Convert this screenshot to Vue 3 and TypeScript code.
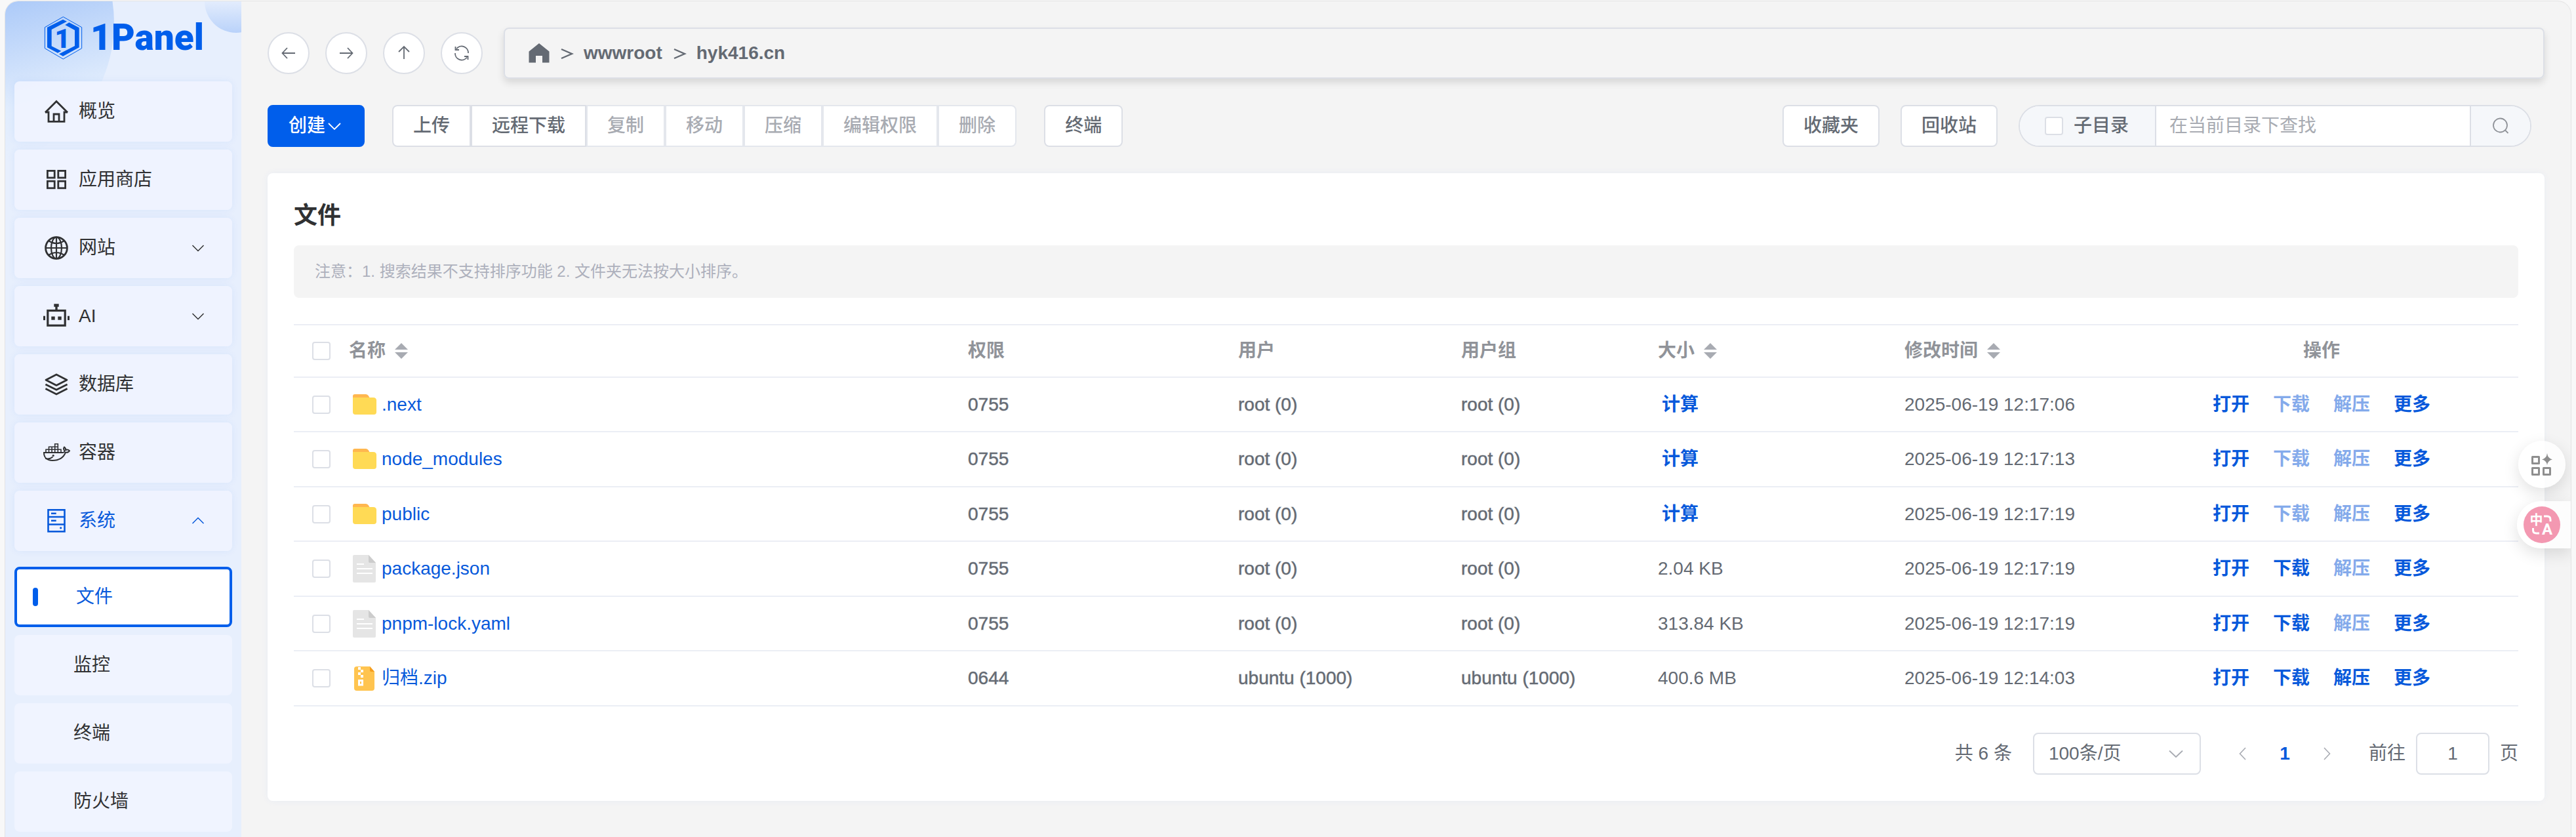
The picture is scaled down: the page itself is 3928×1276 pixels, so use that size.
<script setup lang="ts">
import { ref } from 'vue'

type IconName = 'home' | 'apps' | 'globe' | 'robot' | 'layers' | 'docker' | 'server'

interface MenuEntry {
  label: string
  icon: IconName
  expandable?: boolean
  open?: boolean
}

interface FileRow {
  name: string
  kind: 'folder' | 'file' | 'zip'
  mode: string
  user: string
  group: string
  size: string | null
  mtime: string
  canDownload: boolean
  canExtract: boolean
}

const menu: MenuEntry[] = [
  { label: '概览', icon: 'home' },
  { label: '应用商店', icon: 'apps' },
  { label: '网站', icon: 'globe', expandable: true },
  { label: 'AI', icon: 'robot', expandable: true },
  { label: '数据库', icon: 'layers' },
  { label: '容器', icon: 'docker' },
  { label: '系统', icon: 'server', expandable: true, open: true },
]

const submenu = ['文件', '监控', '终端', '防火墙']
const activeSub = ref('文件')

const crumbs = ['wwwroot', 'hyk416.cn']

const fileActions = [
  { label: '上传', disabled: false },
  { label: '远程下载', disabled: false },
  { label: '复制', disabled: true },
  { label: '移动', disabled: true },
  { label: '压缩', disabled: true },
  { label: '编辑权限', disabled: true },
  { label: '删除', disabled: true },
]

const rows: FileRow[] = [
  { name: '.next', kind: 'folder', mode: '0755', user: 'root (0)', group: 'root (0)', size: null, mtime: '2025-06-19 12:17:06', canDownload: false, canExtract: false },
  { name: 'node_modules', kind: 'folder', mode: '0755', user: 'root (0)', group: 'root (0)', size: null, mtime: '2025-06-19 12:17:13', canDownload: false, canExtract: false },
  { name: 'public', kind: 'folder', mode: '0755', user: 'root (0)', group: 'root (0)', size: null, mtime: '2025-06-19 12:17:19', canDownload: false, canExtract: false },
  { name: 'package.json', kind: 'file', mode: '0755', user: 'root (0)', group: 'root (0)', size: '2.04 KB', mtime: '2025-06-19 12:17:19', canDownload: true, canExtract: false },
  { name: 'pnpm-lock.yaml', kind: 'file', mode: '0755', user: 'root (0)', group: 'root (0)', size: '313.84 KB', mtime: '2025-06-19 12:17:19', canDownload: true, canExtract: false },
  { name: '归档.zip', kind: 'zip', mode: '0644', user: 'ubuntu (1000)', group: 'ubuntu (1000)', size: '400.6 MB', mtime: '2025-06-19 12:14:03', canDownload: true, canExtract: true },
]

const keyword = ref('')
const includeSub = ref(false)
const pageSize = ref('100')
const jumpTo = ref('1')
</script>

<template>
  <div class="window">
    <aside class="sidebar">
      <div class="brand">
        <svg class="brand-mark" viewBox="198 69 180 201" aria-hidden="true">
          <path d="M289 74 374 122V218L289 267 205 218V122Z" fill="none" stroke="#005eeb" stroke-width="3" />
          <path d="M216 122 288 86 306 95 236 132V208L280 230 264 239 216 214Z" fill="#005eeb" />
          <path d="M316 100 362 124V214L288 254 270 244 342 207V135L298 111Z" fill="#005eeb" />
          <text x="286" y="215" text-anchor="middle" font-size="122" font-weight="900" font-family="Roboto, sans-serif" fill="#005eeb">1</text>
        </svg>
        <span class="brand-name">1Panel</span>
      </div>

      <nav class="menu">
        <component
          :is="item.expandable ? 'button' : 'a'"
          v-for="item in menu"
          :key="item.label"
          class="menu-item"
          :class="{ open: item.open }"
          :href="item.expandable ? undefined : '#'"
          :type="item.expandable ? 'button' : undefined"
        >
          <svg class="menu-icon" viewBox="0 0 36 36" fill="none" stroke="currentColor" stroke-width="2.8" aria-hidden="true">
            <template v-if="item.icon === 'home'">
              <path d="M1 19.5 18 2.5 35 19.5" />
              <path d="M1 19H6V33.4H30V19H35" />
              <path d="M14 33V22H22V33" />
            </template>
            <template v-else-if="item.icon === 'apps'">
              <rect x="4.4" y="4.4" width="10.8" height="10.6" />
              <rect x="20.8" y="4.4" width="10.8" height="10.6" />
              <rect x="4.4" y="20.2" width="10.8" height="10.6" />
              <rect x="20.8" y="20.2" width="10.8" height="10.6" />
            </template>
            <template v-else-if="item.icon === 'globe'">
              <circle cx="18" cy="18" r="16.4" />
              <g stroke-width="2.2">
                <ellipse cx="18" cy="18" rx="8" ry="16.4" />
                <path d="M18 2V34M2 18H34M6 7Q18 15 30 7M6 29Q18 21 30 29" />
              </g>
            </template>
            <template v-else-if="item.icon === 'robot'">
              <rect x="4.8" y="9.5" width="26.4" height="22.7" stroke-width="3.2" />
              <g fill="currentColor" stroke="none">
                <path d="M14.3 -.7H21.7V3.7H19.7V8H16.3V3.7H14.3Z" />
                <rect x="10.3" y="18.5" width="5.4" height="5.2" />
                <rect x="20.3" y="18.5" width="5.4" height="5.2" />
                <rect x="-2" y="17.7" width="3" height="6.4" />
                <rect x="35" y="17.7" width="3" height="6.4" />
              </g>
            </template>
            <template v-else-if="item.icon === 'layers'">
              <path d="M18 3 34 11.2 18 19.4 2 11.2Z" stroke-linejoin="round" />
              <path d="M1.4 18 18 26.3 34.6 18M1.4 24.6 18 32.9 34.6 24.6" />
            </template>
            <template v-else-if="item.icon === 'docker'">
              <path
                stroke-width="2"
                d="M-1 18H27.5C30 18 31 16.5 30 14.5 28.6 12.500 28.800 11 30 9.600 32 11 32.400 12.600 32.200 14 34 13.300 36.500 13.800 38 15.200 36.500 17.800 34 18 32 17.700 29 25.500 23 30 12 30 3 30-1 25-1 18Z"
              />
              <path stroke-width="1.6" d="M2 17.500V13.300H25V17.500M6.500 17.500V9.200H20.300V17.500M11.100 17.500V9.200M15.700 17.500V4.700H20.300V9.200" />
              <path stroke-width="2" d="M1 26.800C6 28.300 9.500 27 12.500 24.500" />
              <circle cx="13.200" cy="22.500" r="1.600" fill="currentColor" stroke="none" />
            </template>
            <template v-else>
              <rect x="5.500" y="1.300" width="25" height="33" stroke-width="2.600" />
              <path stroke-width="2.400" d="M5 12H31M5 23.500H31M10 6.700H17.700M10 17.700H17.700" />
              <circle cx="24.700" cy="28.800" r="1.600" fill="currentColor" stroke="none" />
            </template>
          </svg>
          <span class="menu-label">{{ item.label }}</span>
          <svg v-if="item.expandable" class="menu-arrow" viewBox="0 0 24 24" fill="none" stroke="currentColor" stroke-width="1.500" aria-hidden="true">
            <path :d="item.open ? 'M3.500 16 12 7.500 20.500 16' : 'M3.500 8 12 16.500 20.500 8'" />
          </svg>
        </component>

        <div class="submenu">
          <a v-for="name in submenu" :key="name" href="#" class="sub-item" :class="{ active: name === activeSub }">{{ name }}</a>
        </div>
      </nav>
    </aside>

    <main class="main">
      <div class="path-row">
        <div class="nav-buttons">
          <button type="button" class="round" aria-label="后退">
            <svg viewBox="0 0 28 28"><path d="M24 14H5M12 6 4.500 14 12 22" /></svg>
          </button>
          <button type="button" class="round" aria-label="前进">
            <svg viewBox="0 0 28 28"><path d="M4 14H23M16 6 23.500 14 16 22" /></svg>
          </button>
          <button type="button" class="round" aria-label="上级目录">
            <svg viewBox="0 0 28 28"><path d="M14 23V4M6 12 14 4 22 12" /></svg>
          </button>
          <button type="button" class="round" aria-label="刷新">
            <svg viewBox="0 0 28 28">
              <path d="M4 14A10 10 0 0 0 22 20.500M24 14A10 10 0 0 0 6 7.500" />
              <path d="M4.500 4V9H10M23.500 24V19H18" />
            </svg>
          </button>
        </div>
        <div class="path-bar">
          <a href="#" class="crumb-home" aria-label="根目录">
            <svg viewBox="0 0 32 32" aria-hidden="true"><path d="M16 1 31.500 13.500V30.500H21V20H11V30.500H.5V13.500Z" fill="currentColor" /></svg>
          </a>
          <template v-for="c in crumbs" :key="c">
            <svg class="crumb-sep" viewBox="0 0 20 20" aria-hidden="true"><path d="M2 4 18 11 2 18" fill="none" stroke="currentColor" stroke-width="2.400" /></svg>
            <a href="#" class="crumb">{{ c }}</a>
          </template>
        </div>
      </div>

      <div class="toolbar">
        <button type="button" class="btn primary">
          创建
          <svg viewBox="0 0 28 28" aria-hidden="true"><path d="M5 10 14 19 23 10" fill="none" stroke="currentColor" stroke-width="1.800" /></svg>
        </button>
        <div class="btn-group">
          <button v-for="a in fileActions" :key="a.label" type="button" class="btn" :disabled="a.disabled">{{ a.label }}</button>
        </div>
        <button type="button" class="btn">终端</button>
        <div class="toolbar-right">
          <button type="button" class="btn">收藏夹</button>
          <button type="button" class="btn">回收站</button>
          <form class="search" @submit.prevent>
            <label class="search-scope">
              <input v-model="includeSub" type="checkbox" class="check" />
              <span>子目录</span>
            </label>
            <input v-model="keyword" type="text" class="search-input" placeholder="在当前目录下查找" aria-label="在当前目录下查找" />
            <button type="submit" class="search-btn" aria-label="搜索">
              <svg viewBox="0 0 28 28" fill="none" stroke="currentColor" stroke-width="1.800"><circle cx="13.500" cy="13" r="10.500" /><path d="M21 20.500 25.500 25" /></svg>
            </button>
          </form>
        </div>
      </div>

      <section class="card">
        <h1 class="card-title">文件</h1>
        <p class="notice">注意：1. 搜索结果不支持排序功能 2. 文件夹无法按大小排序。</p>

        <table class="files">
          <colgroup>
            <col class="c-check" />
            <col />
            <col class="c-mode" />
            <col class="c-user" />
            <col class="c-group" />
            <col class="c-size" />
            <col class="c-time" />
            <col class="c-ops" />
          </colgroup>
          <thead>
            <tr>
              <th class="cell-check"><input type="checkbox" class="check" aria-label="全选" /></th>
              <th><span class="sortable">名称<i class="sort" /></span></th>
              <th>权限</th>
              <th>用户</th>
              <th>用户组</th>
              <th><span class="sortable">大小<i class="sort" /></span></th>
              <th><span class="sortable">修改时间<i class="sort" /></span></th>
              <th class="cell-ops">操作</th>
            </tr>
          </thead>
          <tbody>
            <tr v-for="row in rows" :key="row.name">
              <td class="cell-check"><input type="checkbox" class="check" :aria-label="row.name" /></td>
              <td>
                <a href="#" class="file-link">
                  <svg v-if="row.kind === 'folder'" class="file-icon" viewBox="0 0 36 44" aria-hidden="true">
                    <path d="M0 18V9Q0 6 3 6H20Q22.500 6 24 8.500L26.500 13V20H0Z" fill="#ffb74f" />
                    <path d="M0 11H31Q36 11 36 15.500V33Q36 37 32 37H4Q0 37 0 33Z" fill="#ffda55" />
                  </svg>
                  <svg v-else-if="row.kind === 'file'" class="file-icon" viewBox="0 0 36 44" aria-hidden="true">
                    <path d="M2 1H24L35 13V41Q35 43 33 43H2Q0 43 0 41V3Q0 1 2 1Z" fill="#e5e5e5" />
                    <path d="M24 1 35 13H26Q24 13 24 11Z" fill="#cccccc" />
                    <path d="M6 15H17M6 22H30M6 29H30" stroke="#fff" stroke-width="2" />
                  </svg>
                  <svg v-else class="file-icon" viewBox="0 0 36 44" aria-hidden="true">
                    <path d="M6 4H26L33 12V37Q33 41 29 41H6Q2 41 2 37V8Q2 4 6 4Z" fill="#ffc44f" />
                    <path d="M26 4 33 12H28Q26 12 26 10Z" fill="#f59e1f" />
                    <path d="M8 5H12V9H8ZM12 9H16V13H12ZM8 13H12V17H8ZM12 17H16V21H12Z" fill="#fff" />
                    <path d="M9.500 25.500H14.500V32H9.500Z" fill="none" stroke="#fff" stroke-width="3" />
                  </svg>
                  <span>{{ row.name }}</span>
                </a>
              </td>
              <td><button type="button" class="plain">{{ row.mode }}</button></td>
              <td><button type="button" class="plain">{{ row.user }}</button></td>
              <td><button type="button" class="plain">{{ row.group }}</button></td>
              <td>
                <button v-if="row.size === null" type="button" class="op calc">计算</button>
                <template v-else>{{ row.size }}</template>
              </td>
              <td>{{ row.mtime }}</td>
              <td class="cell-ops">
                <div class="ops">
                  <button type="button" class="op">打开</button>
                  <button type="button" class="op" :disabled="!row.canDownload">下载</button>
                  <button type="button" class="op" :disabled="!row.canExtract">解压</button>
                  <button type="button" class="op">更多</button>
                </div>
              </td>
            </tr>
          </tbody>
        </table>

        <div class="pagination">
          <span class="total">共 {{ rows.length }} 条</span>
          <span class="select-wrap">
            <select v-model="pageSize" class="page-size" aria-label="每页条数">
              <option value="100">100条/页</option>
              <option value="200">200条/页</option>
            </select>
            <svg viewBox="0 0 28 28" aria-hidden="true"><path d="M4 9.500 14 19 24 9.500" fill="none" stroke="currentColor" stroke-width="1.800" /></svg>
          </span>
          <div class="pager">
            <button type="button" class="page-btn muted" aria-label="上一页">
              <svg viewBox="0 0 24 24"><path d="M16 3 7.500 12 16 21" /></svg>
            </button>
            <button type="button" class="page-btn current">1</button>
            <button type="button" class="page-btn muted" aria-label="下一页">
              <svg viewBox="0 0 24 24"><path d="M8 3 16.500 12 8 21" /></svg>
            </button>
          </div>
          <label class="jump">前往<input v-model="jumpTo" type="text" class="jump-input" />页</label>
        </div>
      </section>
    </main>

    <div class="floating">
      <button type="button" class="float-apps" aria-label="工具">
        <svg viewBox="0 0 36 36" aria-hidden="true">
          <path d="M3.500 6.500H13.500V16.500H3.500ZM3.500 23.500H13.500V33.500H3.500ZM20.500 23.500H30.500V33.500H20.500Z" fill="none" stroke="#8e8e8e" stroke-width="3" stroke-linejoin="round" />
          <path d="M26 1Q27 9 34 10.500 27 12 26 19 25 12 18 10.500 25 9 26 1Z" fill="#8e8e8e" />
        </svg>
      </button>
      <button type="button" class="float-translate" aria-label="翻译">
        <svg viewBox="0 0 56 56" aria-hidden="true">
          <circle cx="28" cy="28" r="28" fill="#f398b1" />
          <text x="19.500" y="28" text-anchor="middle" font-size="20" font-weight="700" font-family="'Noto Sans CJK SC', sans-serif" fill="#fff">中</text>
          <text x="36" y="43" text-anchor="middle" font-size="24" font-weight="700" font-family="Roboto, sans-serif" fill="#fff">A</text>
          <path d="M31 15H36Q41 15 41 20V23M14.500 33V36Q14.500 41 19.500 41H24" fill="none" stroke="#fff" stroke-width="3" />
        </svg>
      </button>
    </div>
  </div>
</template>

<style>
body {
  background: #f8f8f8;
}
</style>

<style scoped>
.window {
  --blue: #005eeb;
  --blue-text: #0759db;
  --text: #646a73;
  --line: #dcdfe6;
  position: relative;
  display: flex;
  box-sizing: border-box;
  min-height: calc(100vh - 1px);
  margin: 1px 7px 0;
  border: 1px solid #e4e4e4;
  border-bottom: 0;
  border-radius: 21px 21px 0 0;
  overflow: hidden;
  background: #f4f4f4;
  color: var(--text);
  font: 28px/40px "Liberation Sans", "Noto Sans CJK SC", sans-serif;
}

.window *,
.window *::before,
.window *::after {
  box-sizing: border-box;
}

button,
input,
select {
  margin: 0;
  padding: 0;
  border: 0;
  background: none;
  color: inherit;
  font: inherit;
}

a {
  color: inherit;
  text-decoration: none;
}

svg {
  display: block;
  flex: none;
  overflow: visible;
}

/* Sidebar */
.sidebar {
  position: relative;
  flex: none;
  width: 360px;
  overflow: hidden;
  background: #e7effd;
}

.sidebar::before,
.sidebar::after {
  content: "";
  position: absolute;
  border-radius: 50%;
}

.sidebar::before {
  left: -274px;
  top: -187px;
  width: 440px;
  height: 440px;
  background: linear-gradient(165deg, #a9c8f8 45%, rgba(221, 235, 253, 0.7) 76%, rgba(231, 239, 253, 0) 92%);
}

.sidebar::after {
  left: 304px;
  top: -48px;
  width: 96px;
  height: 96px;
  background: linear-gradient(180deg, #e7effd 45%, #b9d2fa);
}

.brand {
  position: relative;
  z-index: 1;
  display: flex;
  align-items: center;
  gap: 12px;
  height: 110px;
  padding-left: 58px;
}

.brand-mark {
  width: 60px;
  height: 67px;
}

.brand-name {
  color: var(--blue);
  font: 900 55px/64px Roboto, sans-serif;
}

.menu {
  position: relative;
  z-index: 1;
  display: flex;
  flex-direction: column;
  gap: 12px;
  padding: 12px 14px 0;
}

.menu-item {
  display: flex;
  align-items: center;
  gap: 16px;
  height: 92px;
  padding: 0 40px 0 46px;
  border-radius: 8px;
  background: rgba(240, 244, 255, 0.88);
  box-shadow: 0 0 12px rgba(0, 94, 235, 0.07);
  color: #303133;
  text-align: left;
}

.menu-item.open {
  color: var(--blue-text);
}

.menu-icon {
  width: 36px;
  height: 36px;
}

.menu-label {
  flex: 1;
}

.menu-arrow {
  width: 24px;
  height: 24px;
}

.submenu {
  display: flex;
  flex-direction: column;
  gap: 12px;
  margin-top: 12px;
}

.sub-item {
  display: flex;
  align-items: center;
  height: 92px;
  padding-left: 90px;
  border-radius: 8px;
  background: #f0f4ff;
  color: #303133;
}

.sub-item.active {
  padding-left: 24px;
  border: 4px solid var(--blue);
  background: #fff;
  color: var(--blue-text);
}

.sub-item.active::before {
  content: "";
  width: 8px;
  height: 28px;
  margin-right: 58px;
  border-radius: 4px;
  background: var(--blue);
}

/* Main column */
.main {
  display: flex;
  flex: 1;
  flex-direction: column;
  gap: 40px;
  min-width: 0;
  padding: 40px;
}

.path-row {
  display: flex;
  align-items: center;
  gap: 32px;
}

.nav-buttons {
  display: flex;
  gap: 24px;
}

.round {
  display: flex;
  align-items: center;
  justify-content: center;
  width: 64px;
  height: 64px;
  border: 2px solid var(--line);
  border-radius: 50%;
  background: #fff;
}

.round svg {
  width: 28px;
  height: 28px;
  fill: none;
  stroke: currentColor;
  stroke-width: 1.8;
}

.path-bar {
  display: flex;
  flex: 1;
  align-items: center;
  gap: 16px;
  height: 78px;
  padding: 0 36px;
  border: 2px solid var(--line);
  border-radius: 8px;
  box-shadow: 0 6px 12px rgba(0, 0, 0, 0.12);
}

.crumb-home svg {
  width: 32px;
  height: 32px;
}

.crumb-sep {
  width: 20px;
  height: 20px;
}

.crumb {
  font-weight: 700;
}

/* Toolbar */
.toolbar {
  display: flex;
  gap: 42px;
  padding-right: 20px;
}

.btn {
  display: flex;
  align-items: center;
  height: 64px;
  padding: 0 30px;
  border: 2px solid var(--line);
  border-radius: 8px;
  background: #fff;
  font-weight: 500;
  white-space: nowrap;
}

.btn:disabled {
  border-color: #e4e7ed;
  color: #a8abb2;
}

.btn.primary {
  border-color: var(--blue);
  background: var(--blue);
  color: #fff;
}

.btn.primary svg {
  width: 28px;
  height: 28px;
}

.btn-group {
  display: flex;
}

.btn-group .btn {
  border-radius: 0;
}

.btn-group .btn:first-child {
  border-radius: 8px 0 0 8px;
}

.btn-group .btn:last-child {
  border-radius: 0 8px 8px 0;
}

.toolbar-right {
  display: flex;
  gap: 32px;
  margin-left: auto;
}

.search {
  display: flex;
  width: 782px;
  height: 64px;
  border: 2px solid var(--line);
  border-radius: 32px;
  overflow: hidden;
  background: #fff;
}

.search-scope {
  display: flex;
  align-items: center;
  gap: 16px;
  width: 208px;
  padding-left: 38px;
  border-right: 2px solid var(--line);
  background: #f5f7fa;
  font-weight: 500;
}

.search-input {
  flex: 1;
  min-width: 0;
  padding: 0 20px;
  outline: 0;
}

.search-input::placeholder {
  color: #a8abb2;
  opacity: 1;
}

.search-btn {
  display: flex;
  align-items: center;
  justify-content: center;
  width: 92px;
  border-left: 2px solid var(--line);
  background: #f5f7fa;
  color: #909399;
}

.search-btn svg {
  width: 28px;
  height: 28px;
}

.check {
  display: block;
  flex: none;
  width: 28px;
  height: 28px;
  border: 2px solid var(--line);
  border-radius: 4px;
  appearance: none;
  background: #fff;
}

/* File card */
.card {
  padding: 40px;
  border-radius: 8px;
  background: #fff;
  box-shadow: 0 0 12px rgba(0, 94, 235, 0.05);
}

.card-title {
  margin: 0 0 20px;
  color: #303133;
  font-size: 36px;
  font-weight: 700;
  line-height: 50px;
}

.notice {
  margin: 0 0 40px;
  padding: 20px 32px;
  border-radius: 8px;
  background: #f4f4f4;
  color: #adb0bc;
  font-size: 24px;
}

.files {
  width: 100%;
  border-spacing: 0;
  border-top: 2px solid #ebeef5;
  table-layout: fixed;
}

.c-check {
  width: 60px;
}

.c-mode {
  width: 412px;
}

.c-user {
  width: 340px;
}

.c-group {
  width: 300px;
}

.c-size {
  width: 376px;
}

.c-time {
  width: 360px;
}

.c-ops {
  width: 600px;
}

.files th,
.files td {
  height: 84px;
  padding: 0 24px;
  border-bottom: 2px solid #ebeef5;
  text-align: left;
  white-space: nowrap;
}

.files th {
  height: 80px;
  color: #909399;
  font-weight: 700;
}

.files tbody tr:nth-child(odd) td {
  height: 83px;
}

.files .cell-check {
  padding: 0 0 0 28px;
}

.files .cell-ops {
  text-align: center;
}

.sortable {
  display: flex;
  align-items: center;
  gap: 14px;
}

.sort {
  display: flex;
  flex-direction: column;
  gap: 4px;
}

.sort::before,
.sort::after {
  content: "";
  border: 10px solid transparent;
}

.sort::before {
  border-top: 0;
  border-bottom-color: #a8abb2;
}

.sort::after {
  border-bottom: 0;
  border-top-color: #a8abb2;
}

.file-link {
  display: flex;
  align-items: center;
  gap: 8px;
  padding-left: 6px;
  color: var(--blue-text);
}

.file-icon {
  width: 36px;
  height: 44px;
}

/* Medium weight for the Latin face, which only ships regular and bold */
.plain {
  display: block;
  -webkit-text-stroke: 1px rgba(100, 106, 115, 0.5);
}

.ops {
  display: flex;
  justify-content: center;
  gap: 36px;
}

.op {
  color: var(--blue-text);
  font-weight: 700;
}

.op:disabled {
  color: #84aaeb;
}

.calc {
  display: block;
  padding-left: 6px;
}

/* Pagination */
.pagination {
  display: flex;
  align-items: center;
  justify-content: flex-end;
  gap: 32px;
  margin-top: 40px;
}

.select-wrap {
  position: relative;
}

.page-size {
  display: block;
  width: 256px;
  height: 64px;
  padding: 0 22px;
  border: 2px solid var(--line);
  border-radius: 8px;
  appearance: none;
  background: #fff;
}

.select-wrap svg {
  position: absolute;
  top: 18px;
  right: 24px;
  width: 28px;
  height: 28px;
  color: #a8abb2;
  pointer-events: none;
}

.pager {
  display: flex;
}

.page-btn {
  display: flex;
  align-items: center;
  justify-content: center;
  width: 64px;
  height: 64px;
}

.page-btn svg {
  width: 24px;
  height: 24px;
  fill: none;
  stroke: currentColor;
  stroke-width: 1.6;
}

.page-btn.muted {
  color: #a8abb2;
}

.page-btn.current {
  color: var(--blue-text);
  font-weight: 700;
}

.jump {
  display: flex;
  align-items: center;
  gap: 16px;
}

.jump-input {
  width: 112px;
  height: 64px;
  border: 2px solid var(--line);
  border-radius: 8px;
  text-align: center;
}

/* Buttons docked over the right edge */
.floating {
  position: absolute;
  top: 670px;
  right: 0;
  display: flex;
  flex-direction: column;
  align-items: flex-end;
  gap: 20px;
}

.float-apps,
.float-translate {
  display: flex;
  align-items: center;
  height: 72px;
  background: rgba(255, 255, 255, 0.8);
  box-shadow: 0 8px 24px rgba(0, 0, 0, 0.12);
}

.float-apps {
  justify-content: center;
  width: 72px;
  margin-right: 8px;
  border-radius: 36px;
}

.float-apps svg {
  width: 36px;
  height: 36px;
}

.float-translate {
  width: 82px;
  padding-left: 10px;
  border-radius: 36px 0 0 36px;
}

.float-translate svg {
  width: 56px;
  height: 56px;
}
</style>
